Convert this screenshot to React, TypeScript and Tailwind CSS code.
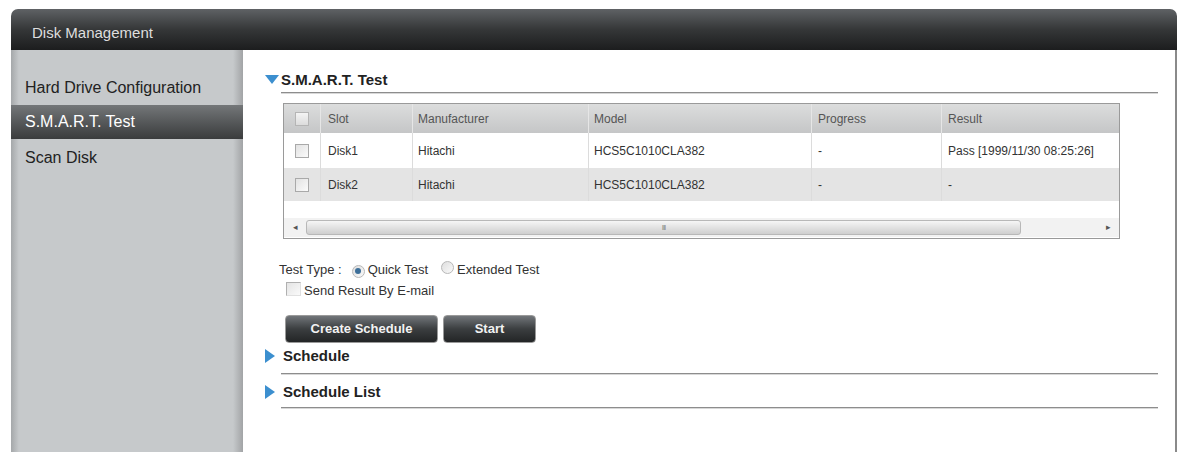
import React from "react";

const font = { fontFamily: '"Liberation Sans", Arial, sans-serif' };

function Check({ header }: { header?: boolean }) {
  return (
    <span
      className={`inline-block w-[14px] h-[14px] border ${header ? "border-[#b5b5b5] bg-gradient-to-b from-[#f4f4f4] to-[#dcdcdc]" : "border-[#a9a9a9] bg-gradient-to-br from-[#e2e2e2] to-[#fbfbfb]"}`}
    />
  );
}

function Radio({ checked }: { checked?: boolean }) {
  return (
    <span className="relative inline-flex items-center justify-center w-[13px] h-[13px] rounded-full border border-[#b8b8b8] bg-gradient-to-br from-[#dedede] to-[#fafafa]">
      {checked && <span className="w-[6px] h-[6px] rounded-full bg-[#3d6f99]" />}
    </span>
  );
}

function TriDown() {
  return (
    <svg width="14" height="10" viewBox="0 0 14 10" className="block">
      <polygon points="0,0 14,0 7,9" fill="#3c8fcf" />
    </svg>
  );
}

function TriRight() {
  return (
    <svg width="10" height="14" viewBox="0 0 10 14" className="block">
      <polygon points="0,0 10,7 0,14" fill="#3c8fcf" />
    </svg>
  );
}

const cols = "grid grid-cols-[37px_92px_176px_223px_130px_1fr]";

export default function App() {
  const rows = [
    ["Disk1", "Hitachi", "HCS5C1010CLA382", "-", "Pass [1999/11/30 08:25:26]"],
    ["Disk2", "Hitachi", "HCS5C1010CLA382", "-", "-"],
  ];
  return (
    <div className="w-[1184px] h-[456px] bg-white overflow-hidden" style={font}>
      <div className="ml-[11px] mt-[9px] w-[1166px] flex flex-col">
        {/* header */}
        <div className="h-[41px] rounded-t-[7px] bg-gradient-to-b from-[#5f6265] via-[#353738] to-[#1c1d1e] flex items-center pl-[21px] pt-[7px]">
          <span className="text-[15px] text-[#dedede]">Disk Management</span>
        </div>
        <div className="flex h-[402px]">
          {/* sidebar */}
          <div className="w-[232px] relative">
            <div className="absolute inset-0 bg-[linear-gradient(to_right,#a5a8aa_0px,#c6c9cb_8px,#c6c9cb_222px,#a2a4a6_232px)]" />
            <div className="relative pt-[20px] flex flex-col">
              <div className="h-[35px] flex items-center pl-[14px] text-[16px] text-[#222]">Hard Drive Configuration</div>
              <div className="h-[34px] flex items-center pl-[14px] text-[16px] text-white bg-gradient-to-b from-[#747779] to-[#3a3c3d]">S.M.A.R.T. Test</div>
              <div className="h-[38px] flex items-center pl-[14px] text-[16px] text-[#222]">Scan Disk</div>
            </div>
          </div>
          {/* content */}
          <div className="flex-1 bg-white border-r-[2px] border-[#8a8a8a] pl-[22px] pr-[17px] flex flex-col">
            {/* SMART heading */}
            <div className="mt-[21px] h-[18px] flex items-center">
              <TriDown />
              <span className="ml-[2px] text-[15px] font-bold text-[#222]">S.M.A.R.T. Test</span>
            </div>
            <div className="ml-[16px] mt-[3px] h-[2px] bg-[#8d8d8d] border-b border-[#d8d8d8]" />
            {/* table */}
            <div className="ml-[18px] mt-[9px] w-[837px] border border-[#9a9a9a] bg-white text-[12px]">
              <div className={`${cols} h-[29px] bg-gradient-to-b from-[#dcdddd] to-[#c5c6c7] text-[#555]`}>
                <div className="flex items-center justify-center border-r border-[#e6e6e6]"><Check header /></div>
                <div className="flex items-center pl-[7px] border-r border-[#e6e6e6]">Slot</div>
                <div className="flex items-center pl-[5px] border-r border-[#e6e6e6]">Manufacturer</div>
                <div className="flex items-center pl-[5px] border-r border-[#e6e6e6]">Model</div>
                <div className="flex items-center pl-[6px] border-r border-[#e6e6e6]">Progress</div>
                <div className="flex items-center pl-[6px]">Result</div>
              </div>
              {rows.map((r, i) => (
                <div key={i} className={`${cols} ${i === 0 ? "h-[35px] bg-white" : "h-[33px] bg-[#e4e4e4]"} text-[#333]`}>
                  <div className="flex items-center justify-center border-r border-[#dcdcdc]"><Check /></div>
                  <div className="flex items-center pl-[7px] border-r border-[#dcdcdc]">{r[0]}</div>
                  <div className="flex items-center pl-[5px] border-r border-[#dcdcdc]">{r[1]}</div>
                  <div className="flex items-center pl-[5px] border-r border-[#dcdcdc]">{r[2]}</div>
                  <div className="flex items-center pl-[6px] border-r border-[#dcdcdc]">{r[3]}</div>
                  <div className="flex items-center pl-[6px]">{r[4]}</div>
                </div>
              ))}
              <div className="h-[17px]" />
              {/* scrollbar */}
              <div className="h-[19px] mb-[1px] flex items-center bg-[#f2f2f2]">
                <div className="w-[22px] flex items-center justify-center text-[9px] text-[#555]">◂</div>
                <div className="flex-1 h-[17px] flex items-center">
                  <div className="w-[715px] h-[15px] rounded-[3px] border border-[#b8b8b8] bg-gradient-to-b from-[#f6f6f6] via-[#e2e2e2] to-[#cfcfcf] flex items-center justify-center">
                    <span className="text-[8px] leading-none text-[#888] tracking-[-1px]">III</span>
                  </div>
                </div>
                <div className="w-[22px] flex items-center justify-center text-[9px] text-[#555]">▸</div>
              </div>
            </div>
            {/* test type */}
            <div className="ml-[14px] mt-[23px] h-[16px] flex items-center text-[13px] text-[#333]">
              <span>Test Type :</span>
              <span className="ml-[10px]"><Radio checked /></span>
              <span className="ml-[3px]">Quick Test</span>
              <span className="ml-[13px]"><Radio /></span>
              <span className="ml-[3px]">Extended Test</span>
            </div>
            <div className="ml-[21px] mt-[4px] h-[18px] flex items-center text-[13px] text-[#333]">
              <span className="inline-block w-[15px] h-[14px] border border-[#b0b0b0] border-r-[#e0e0e0] border-b-[#e0e0e0] bg-gradient-to-br from-[#e4e4e4] to-[#fafafa] -mt-[4px]" />
              <span className="ml-[3px]">Send Result By E-mail</span>
            </div>
            {/* buttons */}
            <div className="ml-[20px] mt-[15px] flex gap-[5px]">
              <div className="w-[153px] h-[28px] rounded-[4px] border border-[#9a9a9a] bg-gradient-to-b from-[#72767a] via-[#3b3e40] to-[#232526] flex items-center justify-center text-[13px] font-bold text-[#f2f2f2]">Create Schedule</div>
              <div className="w-[93px] h-[28px] rounded-[4px] border border-[#9a9a9a] bg-gradient-to-b from-[#72767a] via-[#3b3e40] to-[#232526] flex items-center justify-center text-[13px] font-bold text-[#f2f2f2]">Start</div>
            </div>
            {/* schedule */}
            <div className="mt-[5px] h-[16px] flex items-center">
              <TriRight />
              <span className="ml-[8px] text-[15px] font-bold text-[#222]">Schedule</span>
            </div>
            <div className="ml-[16px] mt-[9px] h-[2px] bg-[#8d8d8d] border-b border-[#d8d8d8]" />
            <div className="mt-[9px] h-[16px] flex items-center">
              <TriRight />
              <span className="ml-[8px] text-[15px] font-bold text-[#222]">Schedule List</span>
            </div>
            <div className="ml-[16px] mt-[7px] h-[2px] bg-[#8d8d8d] border-b border-[#d8d8d8]" />
          </div>
        </div>
      </div>
    </div>
  );
}
